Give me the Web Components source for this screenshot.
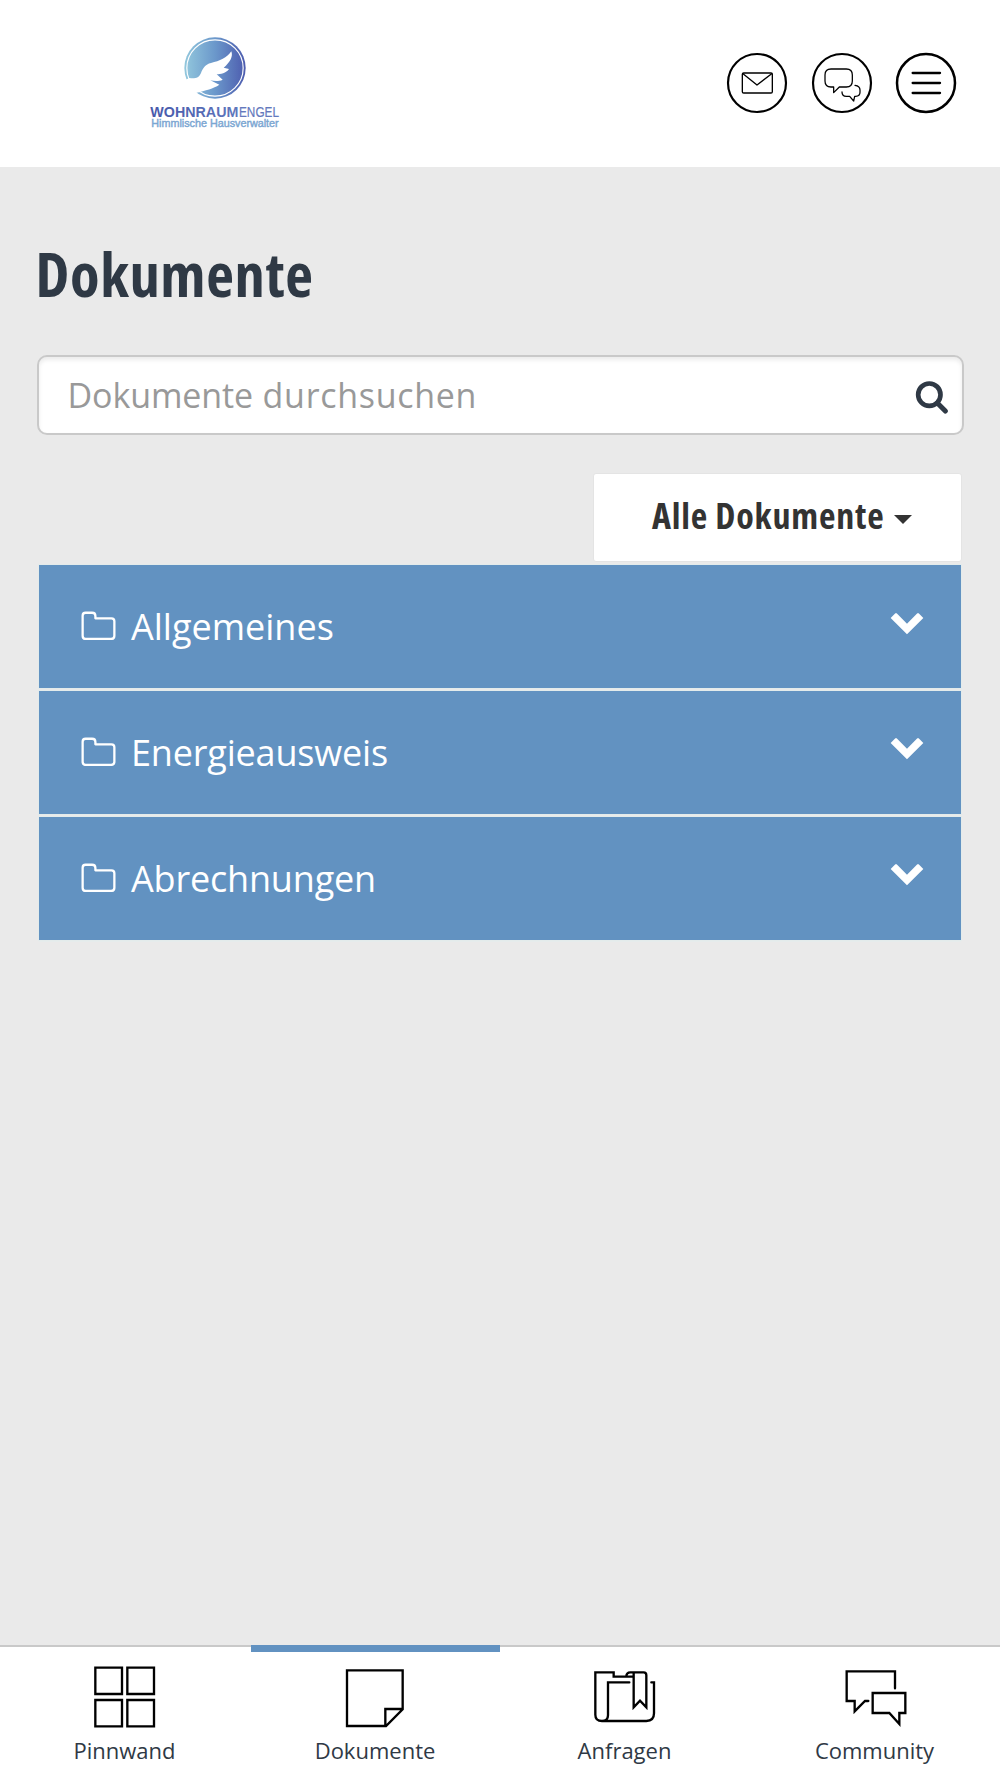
<!DOCTYPE html>
<html lang="de">
<head>
<meta charset="utf-8">
<title>Dokumente</title>
<style>
  body {
    margin: 0;
    background: #eaeaea;
    font-family: "Open Sans", "Noto Sans", sans-serif;
    color: #2f3945;
  }

  .tight { letter-spacing: -.1px; }
</style>
</head>
<body>
<portal-app>
  <portal-header slot="header"></portal-header>
  <page-title>Dokumente</page-title>
  <search-field><span class="tight">Dokumente</span> durchsuchen</search-field>
  <filter-button>Alle Dokumente</filter-button>
  <folder-list>
    <folder-row>Allgemeines</folder-row>
    <folder-row>Energieausweis</folder-row>
    <folder-row>Abrechnungen</folder-row>
  </folder-list>
  <tab-bar slot="footer">
    <tab-item icon="board">Pinnwand</tab-item>
    <tab-item icon="note" active>Dokumente</tab-item>
    <tab-item icon="folder">Anfragen</tab-item>
    <tab-item icon="chat">Community</tab-item>
  </tab-bar>
</portal-app>

<script>
class BaseElement extends HTMLElement {
  constructor() {
    super();
    this.attachShadow({ mode: "open" });
  }

  connectedCallback() {
    this.shadowRoot.innerHTML = `<style>${this.constructor.styles}</style>${this.template()}`;
  }
}

class PortalApp extends BaseElement {
  static get styles() {
    return /* css */`
      :host {
        display: flex;
        flex-direction: column;
        width: 1000px;
        height: 1778px;
        overflow: hidden;
      }

      main {
        flex: 1;
        display: flex;
        flex-direction: column;
        padding: 66px 37px 0 36.5px;
      }
    `;
  }

  template() {
    return /* html */`
      <slot name="header"></slot>
      <main><slot></slot></main>
      <slot name="footer"></slot>
    `;
  }
}

class BrandLogo extends BaseElement {
  static get styles() {
    return /* css */`
      :host { display: block; width: 170px; height: 130px; }
      svg { display: block; }
      text { font-family: "Liberation Sans", Arial, sans-serif; }
    `;
  }

  template() {
    return /* html */`
      <svg width="170" height="130" viewBox="0 0 510 390">
        <defs>
          <linearGradient id="disc" x1="0" x2="1" y1="0" y2="0">
            <stop offset="0" stop-color="#93c8dd"/>
            <stop offset=".5" stop-color="#6b98cb"/>
            <stop offset="1" stop-color="#4c5bae"/>
          </linearGradient>
          <linearGradient id="word" x1="0" x2="1" y1="0" y2="0">
            <stop offset="0" stop-color="#4658aa"/>
            <stop offset="1" stop-color="#5f77bd"/>
          </linearGradient>
        </defs>
        <circle cx="255" cy="144" r="92" fill="url(#disc)"/>
        <circle cx="255" cy="144" r="84.500" fill="none" stroke="#fff" stroke-width="3.500"/>
        <path fill="#fff" d="M160 182 L178 174 C194 177 207 174 213 159 C218 145 226 133 243 129 C269 123 291 114 304 94 C310 109 300 128 281 143 L297 147 C289 159 271 163 260 163 L278 179 C265 185 252 183 241 181 L268 194 C250 206 228 211 196 219 L170 231 Z"/>
        <text x="61" y="290" font-size="45" font-weight="700" fill="url(#word)" textLength="264" lengthAdjust="spacingAndGlyphs">WOHNRAUM</text>
        <text x="327" y="290" font-size="45" fill="#6479bd" stroke="#6479bd" stroke-width=".6" textLength="120" lengthAdjust="spacingAndGlyphs">ENGEL</text>
        <text x="64" y="322" font-size="31" fill="#7ba6d2" stroke="#7ba6d2" stroke-width="1.2" textLength="382" lengthAdjust="spacingAndGlyphs">Himmlische Hausverwalter</text>
      </svg>
    `;
  }
}

class RoundButton extends BaseElement {
  static get icons() {
    return {
      mail: `<g stroke-width="4"><rect x="97" y="130" width="90" height="60" rx="4"/><path d="M99 132 L141 166 L185 132"/></g>`,
      chat: `<g stroke-width="3.8" transform="translate(-254 0)"><path d="M362 118H408Q426 118 426 136V154Q426 172 408 172H387L370 189V172H362Q344 172 344 154V136Q344 118 362 118Z"/><path d="M434 167Q449 169 449 181V188Q449 200 436 200H433L430 214L418 200H408Q395 200 395 187"/></g>`,
      menu: `<path stroke-width="7" d="M101 130H183M101 160H183M101 190H183"/>`
    };
  }

  static get styles() {
    return /* css */`
      :host { display: block; width: 62px; height: 62px; }
      svg { display: block; }
    `;
  }

  template() {
    const name = this.getAttribute("icon");
    const ring = name === "menu" ? 7.5 : 6.5;
    return /* html */`
      <svg width="62" height="62" viewBox="48 67 186 186" fill="none" stroke="#000" stroke-linecap="round" stroke-linejoin="round">
        <circle cx="141" cy="160" r="87" stroke-width="${ring}"/>
        ${RoundButton.icons[name]}
      </svg>
    `;
  }
}

class PortalHeader extends BaseElement {
  static get styles() {
    return /* css */`
      :host {
        display: flex;
        justify-content: space-between;
        align-items: flex-start;
        box-sizing: border-box;
        height: 167px;
        background: #fff;
        padding: 20px 43px 0 130px;
      }

      nav {
        display: flex;
        gap: 22.5px;
        padding-top: 32.3px;
      }
    `;
  }

  template() {
    return /* html */`
      <brand-logo></brand-logo>
      <nav>
        <round-button icon="mail"></round-button>
        <round-button icon="chat"></round-button>
        <round-button icon="menu"></round-button>
      </nav>
    `;
  }
}

class PageTitle extends BaseElement {
  static get styles() {
    return /* css */`
      :host { display: block; height: 82px; }

      h1 {
        margin: 0 0 0 -1px;
        font-size: 60.6px;
        font-weight: 700;
        font-stretch: 75%;
        letter-spacing: .6px;
        line-height: 82px;
        white-space: nowrap;
      }
    `;
  }

  template() {
    return `<h1><slot></slot></h1>`;
  }
}

class SearchField extends BaseElement {
  static get styles() {
    return /* css */`
      :host {
        display: flex;
        justify-content: space-between;
        align-items: center;
        box-sizing: border-box;
        height: 80px;
        margin: 40px -1px 0 0;
        padding: 0 13px 0 29px;
        background: #fff;
        border: 2px solid #c9c9c9;
        border-radius: 10px;
        box-shadow: inset 0 3px 4px rgba(0, 0, 0, .08);
        font-size: 34px;
        letter-spacing: .7px;
        color: #999;
      }

      svg { margin-top: 3px; }
    `;
  }

  template() {
    return /* html */`
      <span><slot></slot></span>
      <svg width="34" height="34" viewBox="0 0 102 102" fill="none" stroke="#2f3945">
        <circle cx="43" cy="44" r="33.500" stroke-width="14"/>
        <path d="M67 69 L91 93" stroke-width="15" stroke-linecap="round"/>
      </svg>
    `;
  }
}

class FilterButton extends BaseElement {
  static get styles() {
    return /* css */`
      :host {
        display: flex;
        align-self: flex-end;
        align-items: center;
        box-sizing: border-box;
        width: 369px;
        height: 89px;
        margin: 38px 1px 0 0;
        padding: 0 0 4px 58px;
        background: #fff;
        border: 1px solid #e4e4e4;
        border-radius: 3px;
        font-size: 36px;
        font-weight: 700;
        font-stretch: 75%;
        letter-spacing: .8px;
        color: #333;
        white-space: nowrap;
      }

      .caret {
        margin: 7px 0 0 10px;
        border: 9.5px solid transparent;
        border-top-color: #333;
        border-bottom: 0;
      }
    `;
  }

  template() {
    return `<span><slot></slot></span><span class="caret"></span>`;
  }
}

class FolderList extends BaseElement {
  static get styles() {
    return /* css */`
      :host {
        display: flex;
        flex-direction: column;
        gap: 2.5px;
        margin: 3px 2px 0;
        border-bottom: 2px solid #e6ecec;
      }
    `;
  }

  template() {
    return `<slot></slot>`;
  }
}

class FolderRow extends BaseElement {
  static get styles() {
    return /* css */`
      :host {
        display: flex;
        align-items: center;
        box-sizing: border-box;
        height: 123.3px;
        padding: 0 37px 0 42px;
        background: #6292c1;
        box-shadow: 0 0 0 1px #e3ebeb;
        color: #fff;
        font-size: 36px;
        letter-spacing: -.18px;
      }

      :host(:first-child) { letter-spacing: 0; }

      span { flex: 1; padding-left: 15.5px; }
      .folder { margin-top: -2px; }
      .chevron { margin-top: -6px; }
    `;
  }

  template() {
    return /* html */`
      <svg class="folder" width="35" height="29" viewBox="1 1 107 88" fill="none" stroke="#fff" stroke-width="7" stroke-linejoin="round">
        <path d="M15 6H35Q45 6 45 16V23H94Q103 23 103 32V76Q103 86 93 86H15Q6 86 6 76V15Q6 6 15 6Z"/>
      </svg>
      <span><slot></slot></span>
      <svg class="chevron" width="34" height="24" viewBox="0 0 102 72" fill="#fff">
        <path d="M2 18 L16 4 Q18 3 20 4 L51 35 L82 4 Q84 3 86 4 L100 18 L51 67 Z"/>
      </svg>
    `;
  }
}

class TabBar extends BaseElement {
  static get styles() {
    return /* css */`
      :host {
        display: grid;
        grid-template-columns: repeat(4, 1fr);
        box-sizing: border-box;
        height: 133px;
        background: #fff;
        box-shadow: inset 0 2px #c9c9c9;
      }
    `;
  }

  template() {
    return `<slot></slot>`;
  }
}

class TabItem extends BaseElement {
  static get icons() {
    return {
      board: `<path stroke-width="7" d="M285 143H365V222H285ZM381 143H461V222H381ZM285 240H365V319H285ZM381 240H461V319H381Z"/>`,
      note: `<path d="M290 151H457V268L407 318H290ZM457 267H405V318"/>`,
      folder: `<path stroke-linecap="round" transform="translate(60 0)" d="M327 187H263V286Q263 303 245 303Q225 303 225 284V157H280V170H338M245 303H378Q401 303 401 280V187H393M340 262V170H318Q318 157 330 157H370Q378 157 378 166V262L359 242ZM340 170V160"/>`,
      chat: `<path stroke-linecap="round" transform="translate(60 0)" d="M374 205V154H229V243H253V274L284 243H294M307 219H405V279H387V312L357 279H307Z"/>`
    };
  }

  static get styles() {
    return /* css */`
      :host {
        display: flex;
        flex-direction: column;
        align-items: center;
        box-sizing: border-box;
        font-size: 22px;
      }

      :host([active]) {
        margin-left: 1px;
        box-shadow: inset 0 7px #6292c1;
      }

      svg { display: block; margin: 17px 1px 0 0; }
      span { line-height: 30px; margin: 5px 1px 0 0; }
    `;
  }

  template() {
    return /* html */`
      <svg width="68" height="68" viewBox="272 126 204 204" fill="none" stroke="#000" stroke-width="7" stroke-linejoin="miter">
        ${TabItem.icons[this.getAttribute("icon")]}
      </svg>
      <span><slot></slot></span>
    `;
  }
}

customElements.define("brand-logo", BrandLogo);
customElements.define("round-button", RoundButton);
customElements.define("portal-header", PortalHeader);
customElements.define("page-title", PageTitle);
customElements.define("search-field", SearchField);
customElements.define("filter-button", FilterButton);
customElements.define("folder-row", FolderRow);
customElements.define("folder-list", FolderList);
customElements.define("tab-item", TabItem);
customElements.define("tab-bar", TabBar);
customElements.define("portal-app", PortalApp);
</script>
</body>
</html>
